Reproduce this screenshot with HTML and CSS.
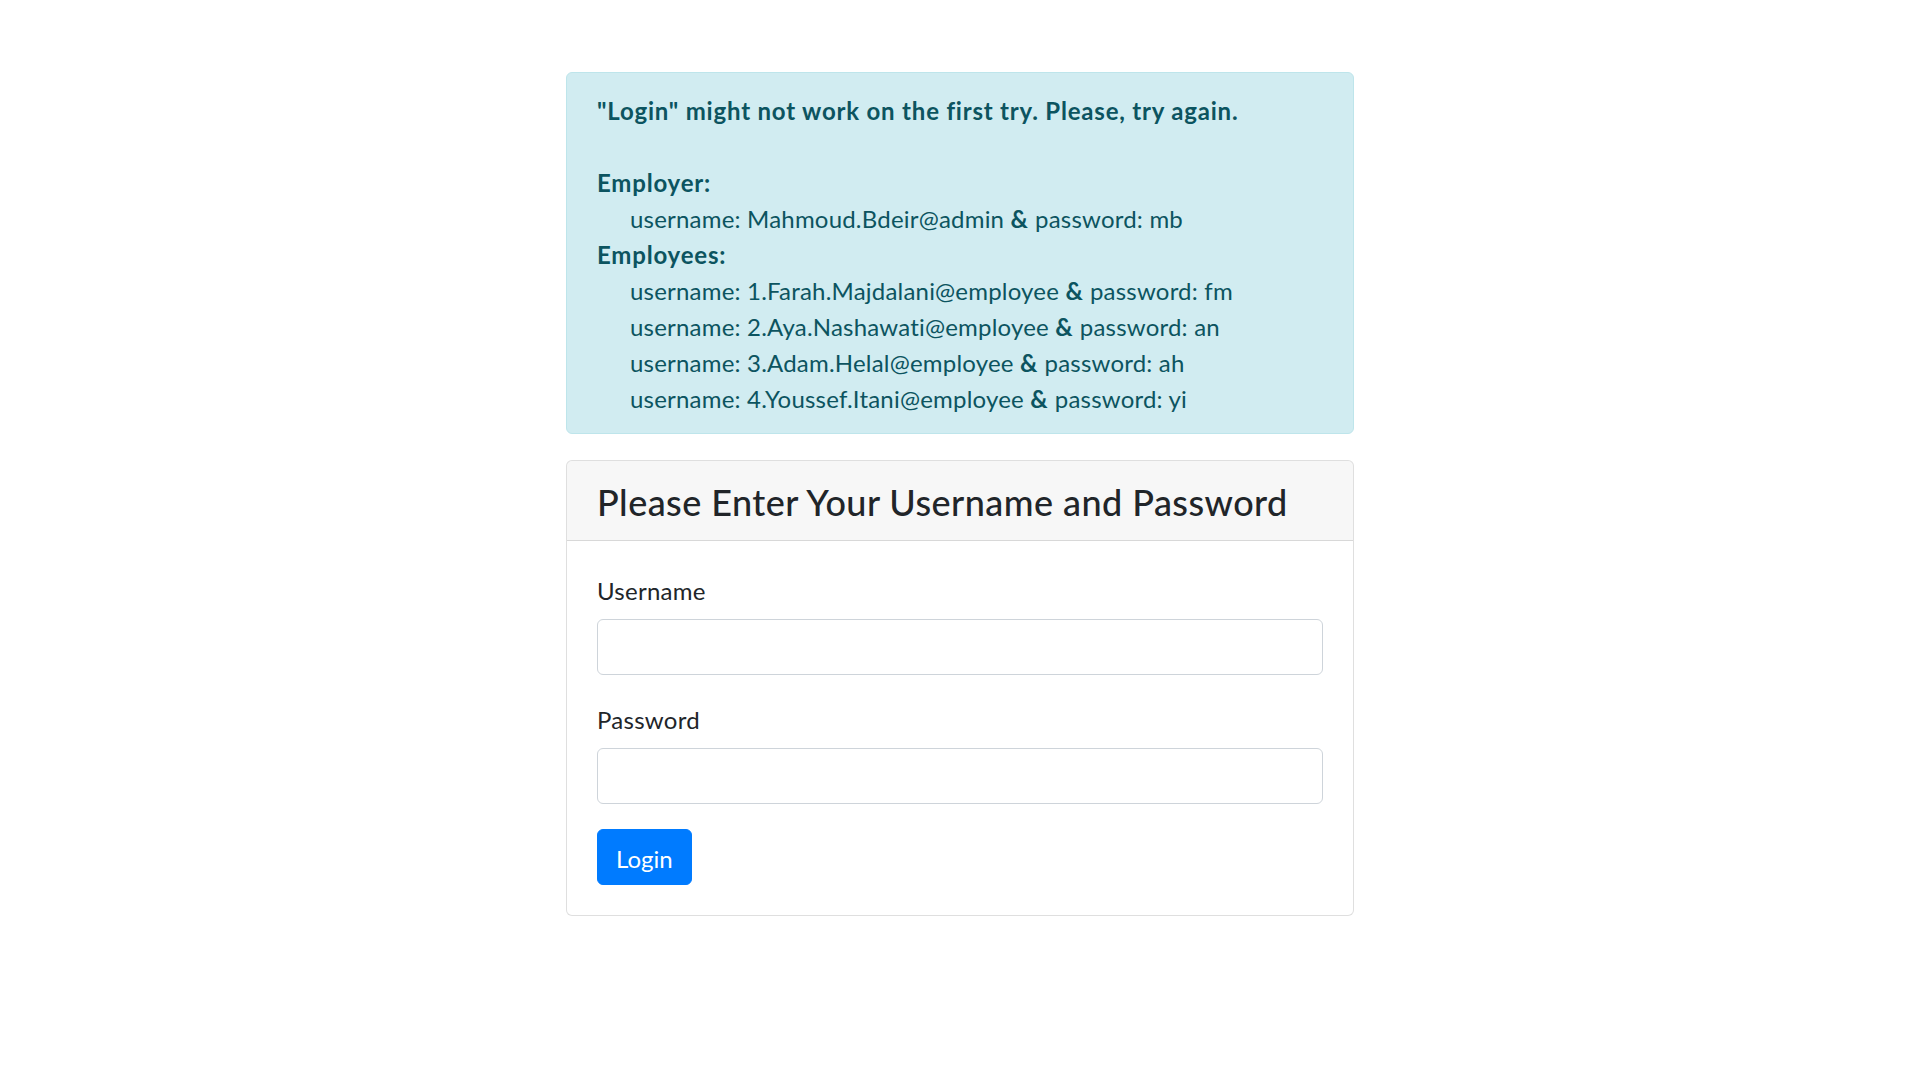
FILE: index.html
```html
<!DOCTYPE html>
<html lang="en">
<head>
<meta charset="utf-8">
<title>Login</title>
<link rel="stylesheet" href="styles.css">
</head>
<body>
<main class="wrap">
  <div class="alert">
    <strong>"Login" might not work on the first try. Please, try again.</strong><br><br>
    <strong>Employer:</strong><br>
    <span class="indent">username: Mahmoud.Bdeir@admin <strong>&amp;</strong> password: mb</span><br>
    <strong>Employees:</strong><br>
    <span class="indent">username: 1.Farah.Majdalani@employee <strong>&amp;</strong> password: fm</span><br>
    <span class="indent">username: 2.Aya.Nashawati@employee <strong>&amp;</strong> password: an</span><br>
    <span class="indent">username: 3.Adam.Helal@employee <strong>&amp;</strong> password: ah</span><br>
    <span class="indent">username: 4.Youssef.Itani@employee <strong>&amp;</strong> password: yi</span>
  </div>
  <div class="card">
    <div class="card-header"><h4 class="title">Please Enter Your Username and Password</h4></div>
    <form class="card-body">
      <div class="form-group">
        <label class="label" for="u">Username</label>
        <input class="control" id="u" type="text">
      </div>
      <div class="form-group">
        <label class="label" for="p">Password</label>
        <input class="control" id="p" type="password">
      </div>
      <button class="btn" type="button">Login</button>
    </form>
  </div>
</main>
</body>
</html>
```
FILE: styles.css
```css
html { font-size: 24px; }
* { box-sizing: border-box; }
body {
  margin: 0;
  font-family: Lato, "Noto Sans", sans-serif;
  font-size: 24px;
  line-height: 1.5;
  color: #212529;
  background: #fff;
  letter-spacing: 0.27px;
}
.wrap {
  width: 788px;
  margin: 72px auto 0;
}
.alert {
  background: #d1ecf1;
  border: 1px solid #bee5eb;
  color: #0c5460;
  border-radius: 6px;
  padding: 20px 30px 16px;
  margin-bottom: 26px;
}
.alert strong { font-weight: 700; letter-spacing: 0.8px; }
.indent { padding-left: 33px; letter-spacing: 0.2px; }
.card {
  border: 1px solid rgba(0,0,0,.125);
  border-radius: 6px;
  background: #fff;
}
.card-header {
  background: rgba(0,0,0,.03);
  border-bottom: 1px solid rgba(0,0,0,.125);
  padding: 20px 30px 16px;
  border-radius: 5px 5px 0 0;
}
.title {
  margin: 0;
  font-size: 36px;
  font-weight: 500;
  line-height: 1.2;
  letter-spacing: 0.45px;
}
.card-body {
  padding: 30px;
  margin: 0;
}
.form-group { margin-bottom: 25px; }
.label {
  display: block;
  padding-top: 2px;
  margin-bottom: 10px;
}
.control {
  display: block;
  width: 100%;
  height: 56px;
  padding: 9px 18px;
  font: inherit;
  border: 1px solid #ced4da;
  border-radius: 6px;
  background: #fff;
}
.btn {
  display: inline-block;
  height: 56px;
  padding: 11px 18px 7px;
  font: inherit;
  color: #fff;
  background: #007bff;
  border: 1px solid #007bff;
  border-radius: 6px;
}
```
